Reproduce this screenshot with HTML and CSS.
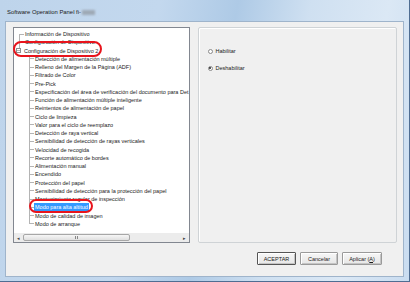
FILE: index.html
```html
<!DOCTYPE html>
<html>
<head>
  <title>Software Operation Panel</title>
  <link rel="stylesheet" href="styles.css">
</head>
<body>
  <div class="window">
    <div class="titlebar">
      <span class="title">Software Operation Panel fi-</span><span class="redacted"></span>
    </div>

    <div class="client">
      <div class="main">
        <div class="tree">
          <ul class="tree-list">
            <li><div class="row root first"><span class="label">Información de Dispositivo</span></div></li>
            <li><div class="row root"><span class="label">Configuración de Dispositivo</span></div></li>
            <li>
              <div class="row root last"><span class="toggle"></span><span class="label">Configuración de Dispositivo 2</span></div>
              <ul class="children">
                <li class="row"><span class="label">Detección de alimentación múltiple</span></li>
                <li class="row"><span class="label">Relleno del Margen de la Página (ADF)</span></li>
                <li class="row"><span class="label">Filtrado de Color</span></li>
                <li class="row"><span class="label">Pre-Pick</span></li>
                <li class="row"><span class="label">Especificación del área de verificación del documento para Det</span></li>
                <li class="row"><span class="label">Función de alimentación múltiple inteligente</span></li>
                <li class="row"><span class="label">Reintentos de alimentación de papel</span></li>
                <li class="row"><span class="label">Ciclo de limpieza</span></li>
                <li class="row"><span class="label">Valor para el ciclo de reemplazo</span></li>
                <li class="row"><span class="label">Detección de raya vertical</span></li>
                <li class="row"><span class="label">Sensibilidad de detección de rayas verticales</span></li>
                <li class="row"><span class="label">Velocidad de recogida</span></li>
                <li class="row"><span class="label">Recorte automático de bordes</span></li>
                <li class="row"><span class="label">Alimentación manual</span></li>
                <li class="row"><span class="label">Encendido</span></li>
                <li class="row"><span class="label">Protección del papel</span></li>
                <li class="row"><span class="label">Sensibilidad de detección para la protección del papel</span></li>
                <li class="row"><span class="label">Mantenimiento regular de inspección</span></li>
                <li class="row"><span class="label selected">Modo para alta altitud</span></li>
                <li class="row"><span class="label">Modo de calidad de imagen</span></li>
                <li class="row last"><span class="label">Modo de arranque</span></li>
              </ul>
            </li>
          </ul>

          <div class="hscroll">
            <span class="arrow">&#9666;</span>
            <div class="track"><div class="thumb"><span class="grip"></span></div></div>
            <span class="arrow">&#9656;</span>
          </div>
        </div>

        <div class="groupbox">
          <label class="radio"><span class="dot"></span>Habilitar</label>
          <label class="radio"><span class="dot checked"></span>Deshabilitar</label>
        </div>
      </div>

      <div class="buttons">
        <button class="btn default">ACEPTAR</button>
        <button class="btn cancel">Cancelar</button>
        <button class="btn apply">Aplicar (<u>A</u>)</button>
      </div>
    </div>

    <!-- marcas rojas del manual -->
    <div class="mark mark-config"></div>
    <div class="mark mark-altitud"></div>
  </div>
</body>
</html>
```

FILE: styles.css
```css
body {
  margin: 0;
  font-family: "Liberation Sans", Arial, sans-serif;
  color: #1a1a1a;
}

.window {
  position: relative;
  width: 410px;
  height: 282px;
  box-sizing: border-box;
  padding: 0 5px 4px 5px;
  display: flex;
  flex-direction: column;
  background: linear-gradient(100deg, #bed4eb 0%, #c3d8ee 35%, #aecae6 52%, #cfe0f1 68%, #dbe8f5 85%, #c9dcf0 100%);
  border-right: 1px solid #4f6d92;
  border-bottom: 1px solid #4f6d92;
}

.titlebar {
  height: 21px;
  display: flex;
  align-items: center;
  padding: 3px 0 0 2px;
  box-sizing: border-box;
  flex-shrink: 0;
}

.title {
  font-size: 5.9px;
}

.redacted {
  display: inline-block;
  width: 13px;
  height: 5px;
  margin-left: 1px;
  background: #9ea9b5;
  filter: blur(1px);
}

.client {
  flex: 1;
  background: #f0f0f0;
  border: 1px solid #9fb4cb;
  padding: 5px 6px 0 7px;
  display: flex;
  flex-direction: column;
}

.main {
  display: flex;
  gap: 8px;
  height: 216px;
}

/* arbol */
.tree {
  width: 177px;
  box-sizing: border-box;
  background: #fff;
  border: 1px solid #828790;
  display: flex;
  flex-direction: column;
  overflow: hidden;
}

.tree-list, .children {
  list-style: none;
  margin: 0;
  padding: 0;
}

.tree-list {
  flex: 1;
  padding-top: 2px;
  font-size: 5.5px;
  white-space: nowrap;
}

.row {
  height: 8.25px;
  line-height: 8.25px;
  display: flex;
  align-items: center;
}

.row.root {
  padding-left: 10px;
  background:
    linear-gradient(#b4b4b4, #b4b4b4) 5px 0 / 1px 100% no-repeat,
    linear-gradient(#b4b4b4, #b4b4b4) 5px 50% / 5px 1px no-repeat;
}

.row.root.first {
  background:
    linear-gradient(#b4b4b4, #b4b4b4) 5px 100% / 1px 50% no-repeat,
    linear-gradient(#b4b4b4, #b4b4b4) 5px 50% / 5px 1px no-repeat;
}

.row.root.last {
  padding-left: 2px;
  background: linear-gradient(#b4b4b4, #b4b4b4) 5px 0 / 1px 50% no-repeat;
}

.toggle {
  width: 5px;
  height: 5px;
  box-sizing: border-box;
  border: 1px solid #8e8f8f;
  background: linear-gradient(#b4b4b4, #b4b4b4) center / 3px 1px no-repeat, #fff;
  margin-right: 2px;
  flex-shrink: 0;
}

.children .row {
  padding-left: 20px;
  background:
    linear-gradient(#b4b4b4, #b4b4b4) 15px 0 / 1px 100% no-repeat,
    linear-gradient(#b4b4b4, #b4b4b4) 15px 50% / 5px 1px no-repeat;
}

.children .row.last {
  background:
    linear-gradient(#b4b4b4, #b4b4b4) 15px 0 / 1px 50% no-repeat,
    linear-gradient(#b4b4b4, #b4b4b4) 15px 50% / 5px 1px no-repeat;
}

.label {
  padding: 0 1px;
}

.label.selected {
  background: #3399ff;
  color: #fff;
}

.hscroll {
  height: 9px;
  display: flex;
  align-items: center;
  background: #ececec;
  flex-shrink: 0;
}

.arrow {
  width: 9px;
  text-align: center;
  font-size: 5px;
  color: #444;
}

.track {
  flex: 1;
  height: 100%;
}

.thumb {
  width: 107px;
  height: 7px;
  margin-top: 1px;
  box-sizing: border-box;
  border: 1px solid #a7a7a7;
  border-radius: 2px;
  background: linear-gradient(#f6f6f6, #e0e0e0);
  display: flex;
  justify-content: center;
  align-items: center;
}

.grip {
  width: 4px;
  height: 3px;
  background: repeating-linear-gradient(90deg, #888 0 1px, transparent 1px 2px);
}

/* grupo de opciones */
.groupbox {
  width: 200px;
  box-sizing: border-box;
  border: 1px solid #cfd3d6;
  border-radius: 2px;
  box-shadow: inset 1px 1px #fff;
  padding: 19px 0 0 9px;
  display: flex;
  flex-direction: column;
  gap: 9px;
}

.radio {
  display: flex;
  align-items: center;
  height: 8px;
  font-size: 5.5px;
}

.dot {
  width: 5px;
  height: 5px;
  box-sizing: border-box;
  border: 1px solid #8a8a8a;
  border-radius: 50%;
  background: #fff;
  margin-right: 3px;
  display: flex;
  align-items: center;
  justify-content: center;
}

.dot.checked::after {
  content: "";
  width: 2px;
  height: 2px;
  border-radius: 50%;
  background: #222;
}

/* botones */
.buttons {
  display: flex;
  justify-content: flex-end;
  gap: 4px;
  margin-top: 9px;
  padding-right: 15px;
}

.btn {
  height: 13px;
  padding: 0;
  font-family: "Liberation Sans", Arial, sans-serif;
  font-size: 5.5px;
  color: #1a1a1a;
  background: linear-gradient(#f7f7f7, #e6e6e6);
  border: 1px solid #9a9a9a;
  border-radius: 1px;
  box-shadow: inset 1px 1px #fff, inset -1px -1px #c4c4c4;
}

.btn.default {
  width: 39px;
  border-color: #555;
}

.btn.cancel {
  width: 38px;
}

.btn.apply {
  width: 40px;
}

/* anotaciones */
.mark {
  position: absolute;
  border: 2px solid #e8141c;
  border-radius: 8px;
}

.mark-config {
  left: 13px;
  top: 41px;
  width: 85px;
  height: 12px;
}

.mark-altitud {
  left: 29px;
  top: 199px;
  width: 60px;
  height: 10px;
}
```
